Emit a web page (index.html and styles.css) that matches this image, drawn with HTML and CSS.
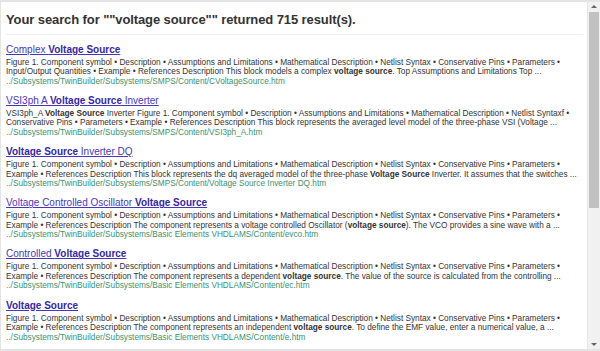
FILE: index.html
```html
<!DOCTYPE html>
<html lang="en">
<head>
  <meta charset="UTF-8">
  <title>Search Results</title>
  <link rel="stylesheet" href="styles.css">
</head>
<body>
  <div class="frame">
    <div class="content">
      <h2 class="summary">Your search for ""voltage source"" returned 715 result(s).</h2>
      <hr class="rule">

      <div class="result">
        <a class="title" href="#">Complex <b>Voltage Source</b></a>
        <p class="desc">Figure 1. Component symbol • Description • Assumptions and Limitations • Mathematical Description • Netlist Syntax • Conservative Pins • Parameters • Input/Output Quantities • Example • References Description This block models a complex <b>voltage source</b>. Top Assumptions and Limitations Top ...</p>
        <div class="url">../Subsystems/TwinBuilder/Subsystems/SMPS/Content/CVoltageSource.htm</div>
      </div>

      <div class="result">
        <a class="title" href="#">VSI3ph A <b>Voltage Source</b> Inverter</a>
        <p class="desc">VSI3ph_A <b>Voltage Source</b> Inverter Figure 1. Component symbol • Description • Assumptions and Limitations • Mathematical Description • Netlist Syntaxf • Conservative Pins • Parameters • Example • References Description This block represents the averaged level model of the three-phase VSI (Voltage ...</p>
        <div class="url">../Subsystems/TwinBuilder/Subsystems/SMPS/Content/VSI3ph_A.htm</div>
      </div>

      <div class="result">
        <a class="title" href="#"><b>Voltage Source</b> Inverter DQ</a>
        <p class="desc">Figure 1. Component symbol • Description • Assumptions and Limitations • Mathematical Description • Netlist Syntax • Conservative Pins • Parameters • Example • References Description This block represents the dq averaged model of the three-phase <b>Voltage Source</b> Inverter. It assumes that the switches ...</p>
        <div class="url">../Subsystems/TwinBuilder/Subsystems/SMPS/Content/Voltage Source Inverter DQ.htm</div>
      </div>

      <div class="result">
        <a class="title" href="#">Voltage Controlled Oscillator <b>Voltage Source</b></a>
        <p class="desc">Figure 1. Component symbol • Description • Assumptions and Limitations • Mathematical Description • Netlist Syntax • Conservative Pins • Parameters • Example • References Description The component represents a voltage controlled Oscillator (<b>voltage source</b>). The VCO provides a sine wave with a ...</p>
        <div class="url">../Subsystems/TwinBuilder/Subsystems/Basic Elements VHDLAMS/Content/evco.htm</div>
      </div>

      <div class="result">
        <a class="title" href="#">Controlled <b>Voltage Source</b></a>
        <p class="desc">Figure 1. Component symbol • Description • Assumptions and Limitations • Mathematical Description • Netlist Syntax • Conservative Pins • Parameters • Example • References Description The component represents a dependent <b>voltage source</b>. The value of the source is calculated from the controlling ...</p>
        <div class="url">../Subsystems/TwinBuilder/Subsystems/Basic Elements VHDLAMS/Content/ec.htm</div>
      </div>

      <div class="result">
        <a class="title" href="#"><b>Voltage Source</b></a>
        <p class="desc">Figure 1. Component symbol • Description • Assumptions and Limitations • Mathematical Description • Netlist Syntax • Conservative Pins • Parameters • Example • References Description The component represents an independent <b>voltage source</b>. To define the EMF value, enter a numerical value, a ...</p>
        <div class="url">../Subsystems/TwinBuilder/Subsystems/Basic Elements VHDLAMS/Content/e.htm</div>
      </div>
    </div>

    <div class="scrollbar">
      <div class="arrow up"></div>
      <div class="track"><div class="thumb"></div></div>
      <div class="arrow down"></div>
    </div>
  </div>
</body>
</html>
```

FILE: styles.css
```css
html, body {
  margin: 0;
  height: 100%;
}
body {
  font-family: "Liberation Sans", Arial, sans-serif;
  background-color: #fff;
}
.frame {
  display: flex;
  height: 351px;
  box-sizing: border-box;
  border-top: 2px solid #e4e4e4;
  border-left: 1px solid #e4e4e4;
  border-bottom: 2px solid #e4e4e4;
}
.content {
  flex: 1;
  padding: 0 4px 0 5px;
  overflow: hidden;
}
.summary {
  margin: 9px 0 0;
  font-size: 13px;
  line-height: 18px;
  letter-spacing: -0.1px;
  color: #333;
}
.rule {
  border: none;
  border-top: 1px solid #eee;
  margin: 5px 0 0;
}
.result {
  margin-top: 7.7px;
}
.title {
  display: block;
  font-size: 10px;
  line-height: 13px;
  color: #4637c0;
  text-decoration: underline;
}
.title b {
  color: #3527a8;
}
.desc {
  margin: 2px 0 0;
  font-size: 8.25px;
  line-height: 9.5px;
  color: #333;
}
.url {
  font-size: 8.25px;
  line-height: 9.5px;
  color: #3b9270;
}
.scrollbar {
  width: 12px;
  background-color: #f1f1f1;
  border-left: 1px solid #e8e8e8;
  display: flex;
  flex-direction: column;
}
.arrow {
  height: 10px;
  position: relative;
}
.arrow::after {
  content: "";
  position: absolute;
  left: 3px;
  border-left: 3px solid transparent;
  border-right: 3px solid transparent;
}
.arrow.up::after {
  top: 3px;
  border-bottom: 3px solid #666;
}
.arrow.down::after {
  top: 4px;
  border-top: 3px solid #666;
}
.track {
  flex: 1;
  padding: 0 1px;
}
.thumb {
  height: 196px;
  background-color: #c1c1c1;
}
```
